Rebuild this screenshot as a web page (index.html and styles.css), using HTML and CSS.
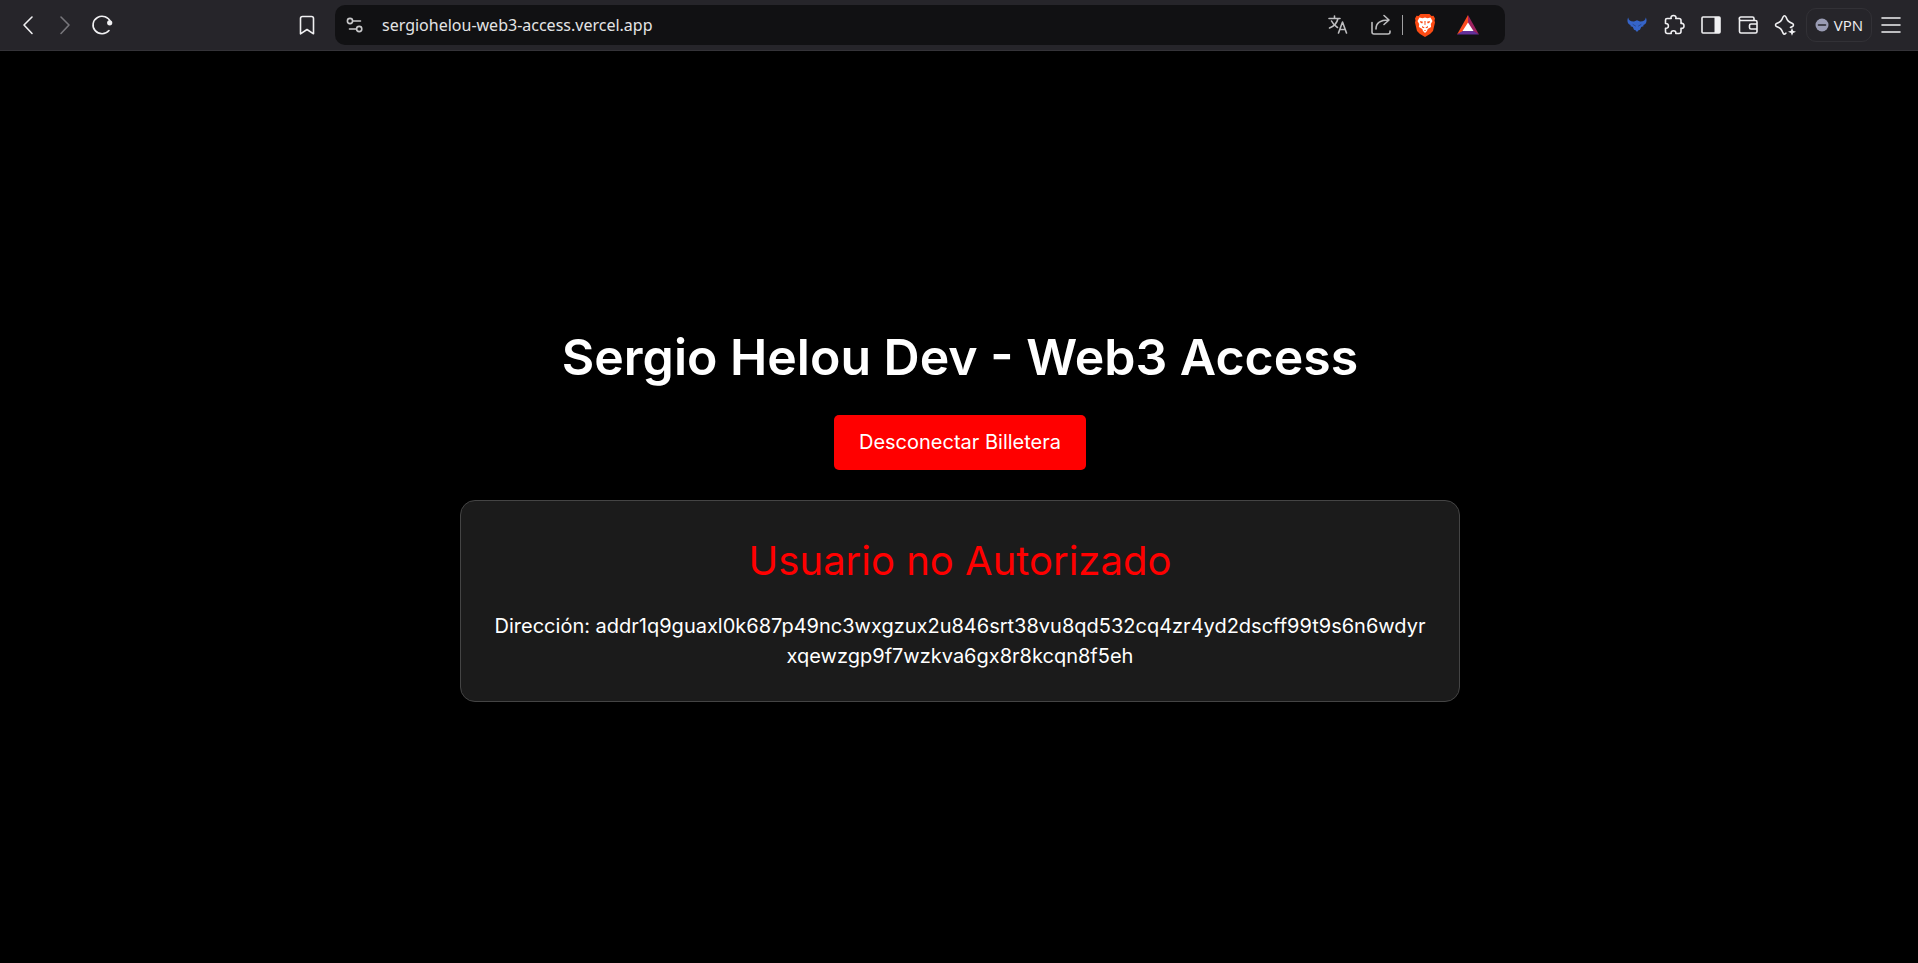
FILE: index.html
```
<!DOCTYPE html>
<html lang="es">
<head>
<meta charset="utf-8">
<title>Sergio Helou Dev - Web3 Access</title>
<link rel="stylesheet" href="styles.css">
</head>
<body>
<header class="toolbar">
  <nav class="group group-left" aria-label="Navegación">
    <button class="tool" aria-label="Atrás"><svg width="24" height="24" viewBox="0 0 24 24"><path d="M16 4 8 12l8 8.500"/></svg></button>
    <button class="tool dim" aria-label="Adelante"><svg width="24" height="24" viewBox="0 0 24 24"><path d="M8 4l8 8-8 8.500"/></svg></button>
    <button class="tool" aria-label="Recargar"><svg width="24" height="24" viewBox="0 0 24 24"><path d="M20.500 9A9 8.700 0 1 0 19 17.500"/><circle class="solid" cx="19.700" cy="9.800" r="2.600"/></svg></button>
    <button class="tool push" aria-label="Marcador"><svg width="24" height="24" viewBox="0 0 24 24"><path d="M5.500 20.500V5.500a2 2 0 0 1 2-2h9a2 2 0 0 1 2 2v15.300l-6.500-4.300-6.500 4.300z"/></svg></button>
  </nav>
  <div class="address-bar">
    <button class="site" aria-label="Información del sitio"><svg width="20" height="20" viewBox="0 0 20 20"><circle cx="5" cy="6" r="2.600"/><path d="M8 6h7.500M4.500 14H11"/><circle cx="14.200" cy="14" r="2.600"/></svg></button>
    <input class="url" type="text" aria-label="Dirección web" value="sergiohelou-web3-access.vercel.app">
    <button class="action muted" aria-label="Traducir"><svg width="22" height="22" viewBox="0 0 22 22"><path d="M2 4.500h11M7.500 2v2.500M11 4.500C10 9 6.500 12.500 2.500 14M4.500 7c1.500 3 3.500 5 6 6.500M11.500 19l4-11 4 11M13 15.500h5"/></svg></button>
    <button class="action muted" aria-label="Compartir"><svg width="24" height="24" viewBox="0 0 24 24"><path d="M3 9.500V19a2 2 0 0 0 2 2h14a2 2 0 0 0 2-2v-1M7 16c0-6 4.500-9 12.500-9M15 2.500l5 4.500-5 4.500"/></svg></button>
    <span class="divider"></span>
    <button class="action" aria-label="Brave Shields"><svg width="22" height="24" viewBox="0 0 22 24"><path class="lion" d="M6.500 1h9l2 2 2-.3 1.500 2.800-.5 2 .5 2-2 8.500-3 3-5 3-5-3-3-3L1 9.500l.5-2L1 5.500l1.500-2.800 2 .3z"/><path class="face" d="M5.500 4.500l3 .7L11 4.500l2.500.7 3-.7L18.500 8l-1.700 3 .3 3-3.400 2-.7 2-2 2-2-2-.7-2-3.400-2 .3-3L3.500 8z"/><path class="lion" d="M6 8l3 .8-.8 1.700-1.700-.8zM16 8l-3 .8.800 1.700 1.700-.8zM10.400 8h1.200l-.2 4h-.8zM8 13l2.500 1.500-.5.800-2-.8zM14 13l-2.500 1.500.5.800 2-.8zM9.800 17h2.400L11 18z"/></svg></button>
    <button class="action" aria-label="Brave Rewards"><svg width="24" height="22" viewBox="0 0 24 22"><path class="bat-left" d="M12 1 1 20.500 8 17l4-7z"/><path class="bat-right" d="M12 1l11 19.500L16 17l-4-7z"/><path class="bat-base" d="M1 20.500h22L16.500 16.500h-9z"/><path class="bat-core" d="M12 8.500 6.500 17h11z"/></svg></button>
  </div>
  <div class="group group-right">
    <button class="tool" aria-label="Extensión de billetera"><svg width="24" height="24" viewBox="0 0 24 24"><path class="bull" d="M3.200 4.500C3.500 7.500 5.500 8.600 9 8.500L12 7.200l3 1.300c3.500.1 5.500-1 5.800-4 1.800 3.500.2 7-2.800 7.700l1 .8-2.800 1-1.200 2.800-1.500.5L12 19l-1.500-1.700-1.500-.5L7.800 14 5 13l1-.8C3 11.500 1.400 8 3.200 4.500z"/><path class="bull-detail" d="M8 11.500l2.500 1.500M16 11.500 13.500 13"/></svg></button>
    <button class="tool" aria-label="Extensiones"><svg width="24" height="24" viewBox="0 0 24 24"><path d="M5 5.500h4.200C8.500 3.500 9.800 2.500 11.500 2.500s3 1 2.300 3H17a2 2 0 0 1 2 2v3c2-.5 3 .7 3 2.400s-1 2.800-3 2.300v3.300a2 2 0 0 1-2 2h-3.200c.4-2-.8-2.700-2.300-2.700s-2.700.7-2.300 2.700H5.500a2 2 0 0 1-2-2V15.200c2 .3 2.900-.8 2.900-2.300s-.9-2.600-2.900-2.400V7a1.500 1.500 0 0 1 1.500-1.500z"/></svg></button>
    <button class="tool" aria-label="Panel lateral"><svg width="24" height="24" viewBox="0 0 24 24"><rect x="3" y="4" width="18" height="16" rx="1"/><path class="solid" d="M15.500 4H21v16h-5.500z"/></svg></button>
    <button class="tool" aria-label="Billetera"><svg width="24" height="24" viewBox="0 0 24 24"><path d="M3.500 6v12.500A1.500 1.500 0 0 0 5 20h14.500a1.500 1.500 0 0 0 1.500-1.500V9a1.500 1.500 0 0 0-1.500-1.500H5A1.700 1.700 0 0 1 5 4h11.500A1.500 1.500 0 0 1 18 5.500v2M21 11h-6a1.500 1.500 0 0 0-1.500 1.500v2A1.500 1.500 0 0 0 15 16h6"/></svg></button>
    <button class="tool" aria-label="Leo"><svg width="24" height="24" viewBox="0 0 24 24"><path d="M17.500 14.500l2-1c1.300-.7 1.300-2.300 0-3-4-1.500-5-2.500-6.500-6.500-.8-1.600-2.200-1.600-3 0-1.500 4-2.500 5-6.500 6.500-1.300.7-1.300 2.300 0 3 4 1.500 5 2.500 6.500 6.500.8 1.500 2.100 1.500 2.900.2"/><path class="solid" d="M19 14.800l1.100 2.900 2.900 1.100-2.900 1.100L19 22.800l-1.100-2.900-2.900-1.100 2.900-1.100z"/></svg></button>
    <button class="vpn"><svg width="14" height="14" viewBox="0 0 14 14"><circle class="status" cx="7" cy="7" r="6.500"/><path class="minus" d="M3.500 7h7"/></svg>VPN</button>
    <button class="tool" aria-label="Menú"><svg width="24" height="24" viewBox="0 0 24 24"><path d="M3 5h18M3 12h18M3 19h18"/></svg></button>
  </div>
</header>
<main class="page">
  <h1 class="title">Sergio Helou Dev - Web3 Access</h1>
  <button class="disconnect">Desconectar Billetera</button>
  <section class="card">
    <p class="status-text">Usuario no Autorizado</p>
    <p class="wallet">Dirección: addr1q9guaxl0k687p49nc3wxgzux2u846srt38vu8qd532cq4zr4yd2dscff99t9s6n6wdyrxqewzgp9f7wzkva6gx8r8kcqn8f5eh</p>
  </section>
</main>
</body>
</html>
```

FILE: styles.css
```
* {
  box-sizing: border-box;
}

body {
  margin: 0;
  min-height: 100vh;
  display: flex;
  flex-direction: column;
  background: #000;
  color: #fff;
  font-family: Inter, sans-serif;
  font-size: 20px;
}

button {
  border: 0;
  padding: 0;
  background: none;
  color: inherit;
  font: inherit;
}

svg {
  display: block;
  fill: none;
  stroke: currentColor;
  stroke-width: 1.6;
  stroke-linecap: round;
  stroke-linejoin: round;
}

.toolbar {
  display: grid;
  grid-template-columns: 335px 1fr 413px;
  align-items: center;
  height: 51px;
  background: #26252a;
  border-bottom: 1px solid #343338;
}

.group {
  display: flex;
  align-items: center;
}

.group-left {
  padding: 0 10px 0 9px;
}

.group-right {
  justify-content: flex-end;
  padding-right: 9px;
}

.tool,
.action,
.site {
  display: grid;
  place-items: center;
  flex: none;
  height: 36px;
  color: #f0f0f2;
}

.tool {
  width: 37px;
}

.action {
  width: 43px;
}

.site {
  width: 40px;
  color: #c8c8ca;
}

.push {
  margin-left: auto;
}

.dim {
  color: #77767b;
}

.muted {
  color: #bdbdbf;
}

.address-bar {
  display: flex;
  align-items: center;
  height: 40px;
  padding-right: 16px;
  border-radius: 10px;
  background: #111113;
}

.url {
  flex: 1;
  min-width: 0;
  margin-left: 7px;
  padding: 0;
  border: 0;
  outline: 0;
  background: none;
  color: #e4e4e6;
  font-family: "Noto Sans", sans-serif;
  font-size: 16px;
}

.divider {
  width: 1px;
  height: 20px;
  background: #a0a0a2;
}

.vpn {
  display: flex;
  align-items: center;
  justify-content: center;
  gap: 5px;
  width: 66px;
  height: 34px;
  margin-left: 3px;
  border: 1px solid #323136;
  border-radius: 10px;
  color: #f0f0f2;
  font-family: "Open Sans", sans-serif;
  font-size: 15px;
}

.solid {
  fill: currentColor;
  stroke: none;
}

.lion {
  fill: #fb4b14;
  stroke: none;
}

.face {
  fill: #fff;
  stroke: none;
}

.bat-left {
  fill: #fa4a1e;
  stroke: none;
}

.bat-right {
  fill: #9c2260;
  stroke: none;
}

.bat-base {
  fill: #63309a;
  stroke: none;
}

.bat-core {
  fill: #fff;
  stroke: none;
}

.bull {
  fill: #3564c8;
  stroke: none;
}

.bull-detail {
  stroke: #274890;
  stroke-width: 1;
}

.status {
  fill: #9a9cb4;
  stroke: none;
}

.minus {
  stroke: #26252a;
}

.page {
  flex: 1;
  display: flex;
  flex-direction: column;
  align-items: center;
  justify-content: center;
  padding-left: 2px;
}

.title {
  margin: 0 0 14px;
  font-size: 50px;
  font-weight: 600;
  line-height: 88px;
}

.disconnect {
  padding: 12px 25px;
  margin-bottom: 30px;
  border-radius: 5px;
  background: #f00;
  color: #fff;
  line-height: 31px;
}

.card {
  width: 100%;
  max-width: 1000px;
  padding: 30px;
  border: 1px solid #444;
  border-radius: 15px;
  background: #1b1b1b;
  text-align: center;
}

.status-text {
  margin: 0 0 20px;
  color: #f00;
  font-size: 40px;
  line-height: 60px;
}

.wallet {
  margin: 0;
  line-height: 30px;
  word-break: break-all;
}
```
